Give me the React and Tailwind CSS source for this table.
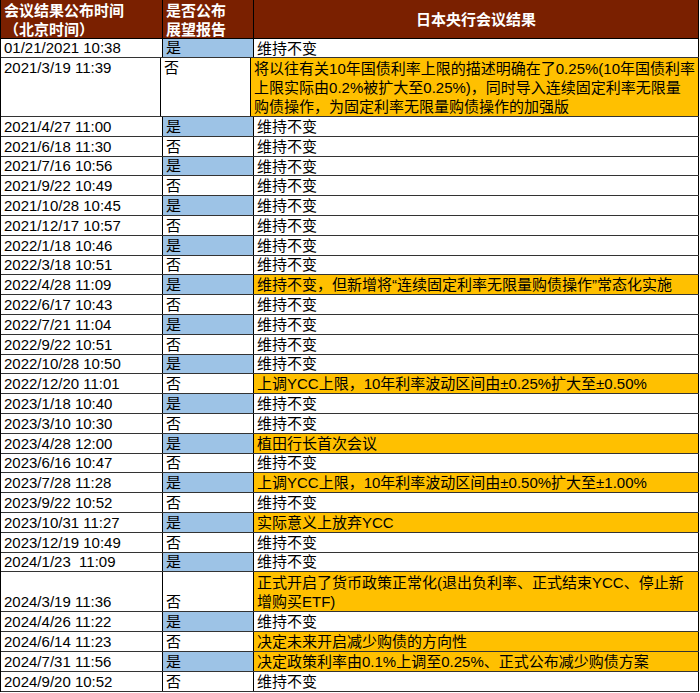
const rows = [
  { d: "01/21/2021 10:38", y: true, r: "维持不变", h: "h-[19px]" },
  {
    d: "2021/3/19 11:39",
    y: false,
    r: ["将以往有关10年国债利率上限的描述明确在了0.25%(10年国债利率", "上限实际由0.2%被扩大至0.25%)，同时导入连续固定利率无限量", "购债操作，为固定利率无限量购债操作的加强版"],
    hl: true,
    h: "h-[59px]",
    top: true,
  },
  { d: "2021/4/27 11:00", y: true, r: "维持不变" },
  { d: "2021/6/18 11:30", y: false, r: "维持不变" },
  { d: "2021/7/16 10:56", y: true, r: "维持不变" },
  { d: "2021/9/22 10:49", y: false, r: "维持不变" },
  { d: "2021/10/28 10:45", y: true, r: "维持不变" },
  { d: "2021/12/17 10:57", y: false, r: "维持不变" },
  { d: "2022/1/18 10:46", y: true, r: "维持不变" },
  { d: "2022/3/18 10:51", y: false, r: "维持不变" },
  { d: "2022/4/28 11:09", y: true, r: "维持不变，但新增将“连续固定利率无限量购债操作”常态化实施", hl: true },
  { d: "2022/6/17 10:43", y: false, r: "维持不变" },
  { d: "2022/7/21 11:04", y: true, r: "维持不变" },
  { d: "2022/9/22 10:51", y: false, r: "维持不变" },
  { d: "2022/10/28 10:50", y: true, r: "维持不变" },
  { d: "2022/12/20 11:01", y: false, r: "上调YCC上限，10年利率波动区间由±0.25%扩大至±0.50%", hl: true },
  { d: "2023/1/18 10:40", y: true, r: "维持不变" },
  { d: "2023/3/10 10:30", y: false, r: "维持不变" },
  { d: "2023/4/28 12:00", y: true, r: "植田行长首次会议", hl: true },
  { d: "2023/6/16 10:47", y: false, r: "维持不变" },
  { d: "2023/7/28 11:28", y: true, r: "上调YCC上限，10年利率波动区间由±0.50%扩大至±1.00%", hl: true },
  { d: "2023/9/22 10:52", y: false, r: "维持不变" },
  { d: "2023/10/31 11:27", y: true, r: "实际意义上放弃YCC", hl: true },
  { d: "2023/12/19 10:49", y: false, r: "维持不变" },
  { d: "2024/1/23  11:09", y: true, r: "维持不变" },
  {
    d: "2024/3/19 11:36",
    y: false,
    r: ["正式开启了货币政策正常化(退出负利率、正式结束YCC、停止新", "增购买ETF)"],
    hl: true,
    h: "h-[40px]",
  },
  { d: "2024/4/26 11:22", y: true, r: "维持不变" },
  { d: "2024/6/14 11:23", y: false, r: "决定未来开启减少购债的方向性", hl: true },
  { d: "2024/7/31 11:56", y: true, r: "决定政策利率由0.1%上调至0.25%、正式公布减少购债方案", hl: true },
  { d: "2024/9/20 10:52", y: false, r: "维持不变" },
];

export default function App() {
  return (
    <div
      className="w-[700px] h-[693px] bg-white overflow-hidden text-[15px] text-black"
      style={{ fontFamily: '"Liberation Sans", "Noto Sans CJK SC", sans-serif' }}
    >
      <div className="w-[699px] border-l border-black">
        {/* header */}
        <div className="flex h-[39px] bg-[#7a2000] text-white font-bold border-b border-black leading-[19px]">
          <div className="w-[162px] border-r border-black px-[3px] pt-[1px]">
            会议结果公布时间
            <br />
            （北京时间）
          </div>
          <div className="w-[91px] border-r border-black px-[3px] pt-[1px]">
            是否公布
            <br />
            展望报告
          </div>
          <div className="flex-1 border-r border-black flex items-center justify-center">
            日本央行会议结果
          </div>
        </div>

        {rows.map((row, i) => {
          const lines = Array.isArray(row.r) ? row.r : [row.r];
          const align = row.top ? "items-start" : "items-end";
          return (
            <div
              key={i}
              className={`flex ${row.h || "h-[19.8px]"} border-b border-[#333] leading-[19px] whitespace-pre`}
            >
              <div className={`w-[162px] border-r border-black px-[3px] flex ${align}`}>{row.d}</div>
              <div
                className={`w-[91px] border-r border-black px-[3px] flex ${align} ${row.y ? "bg-[#9dc3e6]" : ""}`}
              >
                {row.y ? "是" : "否"}
              </div>
              <div
                className={`flex-1 border-r border-black px-[3px] flex flex-col justify-center ${row.hl ? "bg-[#ffc000]" : ""}`}
              >
                {lines.map((l, j) => (
                  <div key={j}>{l}</div>
                ))}
              </div>
            </div>
          );
        })}
      </div>
    </div>
  );
}
